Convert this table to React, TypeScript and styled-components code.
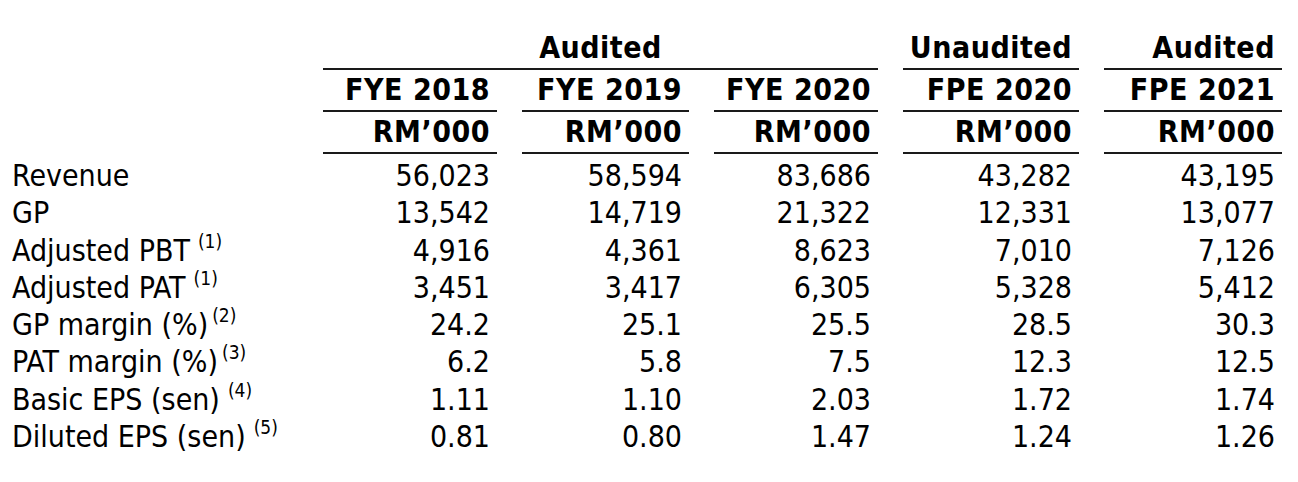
import React from "react";
import styled, { createGlobalStyle } from "styled-components";

const GlobalStyle = createGlobalStyle`
  html, body {
    margin: 0;
    padding: 0;
    background: #ffffff;
  }
  body {
    font-family: "DejaVu Sans Condensed", "DejaVu Sans", Tahoma, sans-serif;
    font-stretch: condensed;
    color: #000000;
  }
`;

const columns = "298px 174px 167px 164px 176px 178px";

const Page = styled.div`
  width: 1298px;
  height: 482px;
  overflow: hidden;
  box-sizing: border-box;
  padding-top: 28px;
`;

const HeaderGrid = styled.div`
  display: grid;
  grid-template-columns: ${columns};
  column-gap: 25px;
`;

const BodyGrid = styled.div`
  display: grid;
  grid-template-columns: ${columns};
  column-gap: 25px;
  padding-top: 3px;
`;

const HeadCell = styled.div<{ $span?: number; $center?: boolean; $line?: boolean }>`
  grid-column: span ${(p) => p.$span ?? 1};
  font-size: 30px;
  font-weight: 700;
  letter-spacing: 0.5px;
  line-height: 40px;
  white-space: nowrap;
  text-align: ${(p) => (p.$center ? "center" : "right")};
  padding-right: ${(p) => (p.$center ? "0" : "7px")};
  border-bottom: 2px solid ${(p) => (p.$line ? "#1a1a1a" : "transparent")};
`;

const Label = styled.div`
  font-size: 30px;
  line-height: 37.3px;
  padding-left: 12px;
  white-space: nowrap;
`;

const Value = styled.div`
  font-size: 30px;
  line-height: 37.3px;
  text-align: right;
  padding-right: 7px;
  white-space: nowrap;
`;

const Note = styled.sup<{ $tight?: boolean }>`
  font-size: 19px;
  line-height: 0;
  vertical-align: 0;
  position: relative;
  top: -13px;
  margin-left: ${(p) => (p.$tight ? "4px" : "8px")};
`;

type Row = { label: string; note?: string; tight?: boolean; values: string[] };

const rows: Row[] = [
  { label: "Revenue", values: ["56,023", "58,594", "83,686", "43,282", "43,195"] },
  { label: "GP", values: ["13,542", "14,719", "21,322", "12,331", "13,077"] },
  { label: "Adjusted PBT", note: "(1)", values: ["4,916", "4,361", "8,623", "7,010", "7,126"] },
  { label: "Adjusted PAT", note: "(1)", values: ["3,451", "3,417", "6,305", "5,328", "5,412"] },
  { label: "GP margin (%)", note: "(2)", tight: true, values: ["24.2", "25.1", "25.5", "28.5", "30.3"] },
  { label: "PAT margin (%)", note: "(3)", tight: true, values: ["6.2", "5.8", "7.5", "12.3", "12.5"] },
  { label: "Basic EPS (sen)", note: "(4)", values: ["1.11", "1.10", "2.03", "1.72", "1.74"] },
  { label: "Diluted EPS (sen)", note: "(5)", values: ["0.81", "0.80", "1.47", "1.24", "1.26"] },
];

const periods = ["FYE 2018", "FYE 2019", "FYE 2020", "FPE 2020", "FPE 2021"];

export default function App() {
  return (
    <>
      <GlobalStyle />
      <Page>
        <HeaderGrid>
          <HeadCell />
          <HeadCell $span={3} $center $line>
            Audited
          </HeadCell>
          <HeadCell $line>Unaudited</HeadCell>
          <HeadCell $line>Audited</HeadCell>

          <HeadCell />
          {periods.map((p) => (
            <HeadCell key={p} $line>
              {p}
            </HeadCell>
          ))}

          <HeadCell />
          {periods.map((p) => (
            <HeadCell key={p + "-unit"} $line>
              RM’000
            </HeadCell>
          ))}
        </HeaderGrid>

        <BodyGrid>
          {rows.map((r) => (
            <React.Fragment key={r.label}>
              <Label>
                {r.label}
                {r.note && <Note $tight={r.tight}>{r.note}</Note>}
              </Label>
              {r.values.map((v, i) => (
                <Value key={i}>{v}</Value>
              ))}
            </React.Fragment>
          ))}
        </BodyGrid>
      </Page>
    </>
  );
}
